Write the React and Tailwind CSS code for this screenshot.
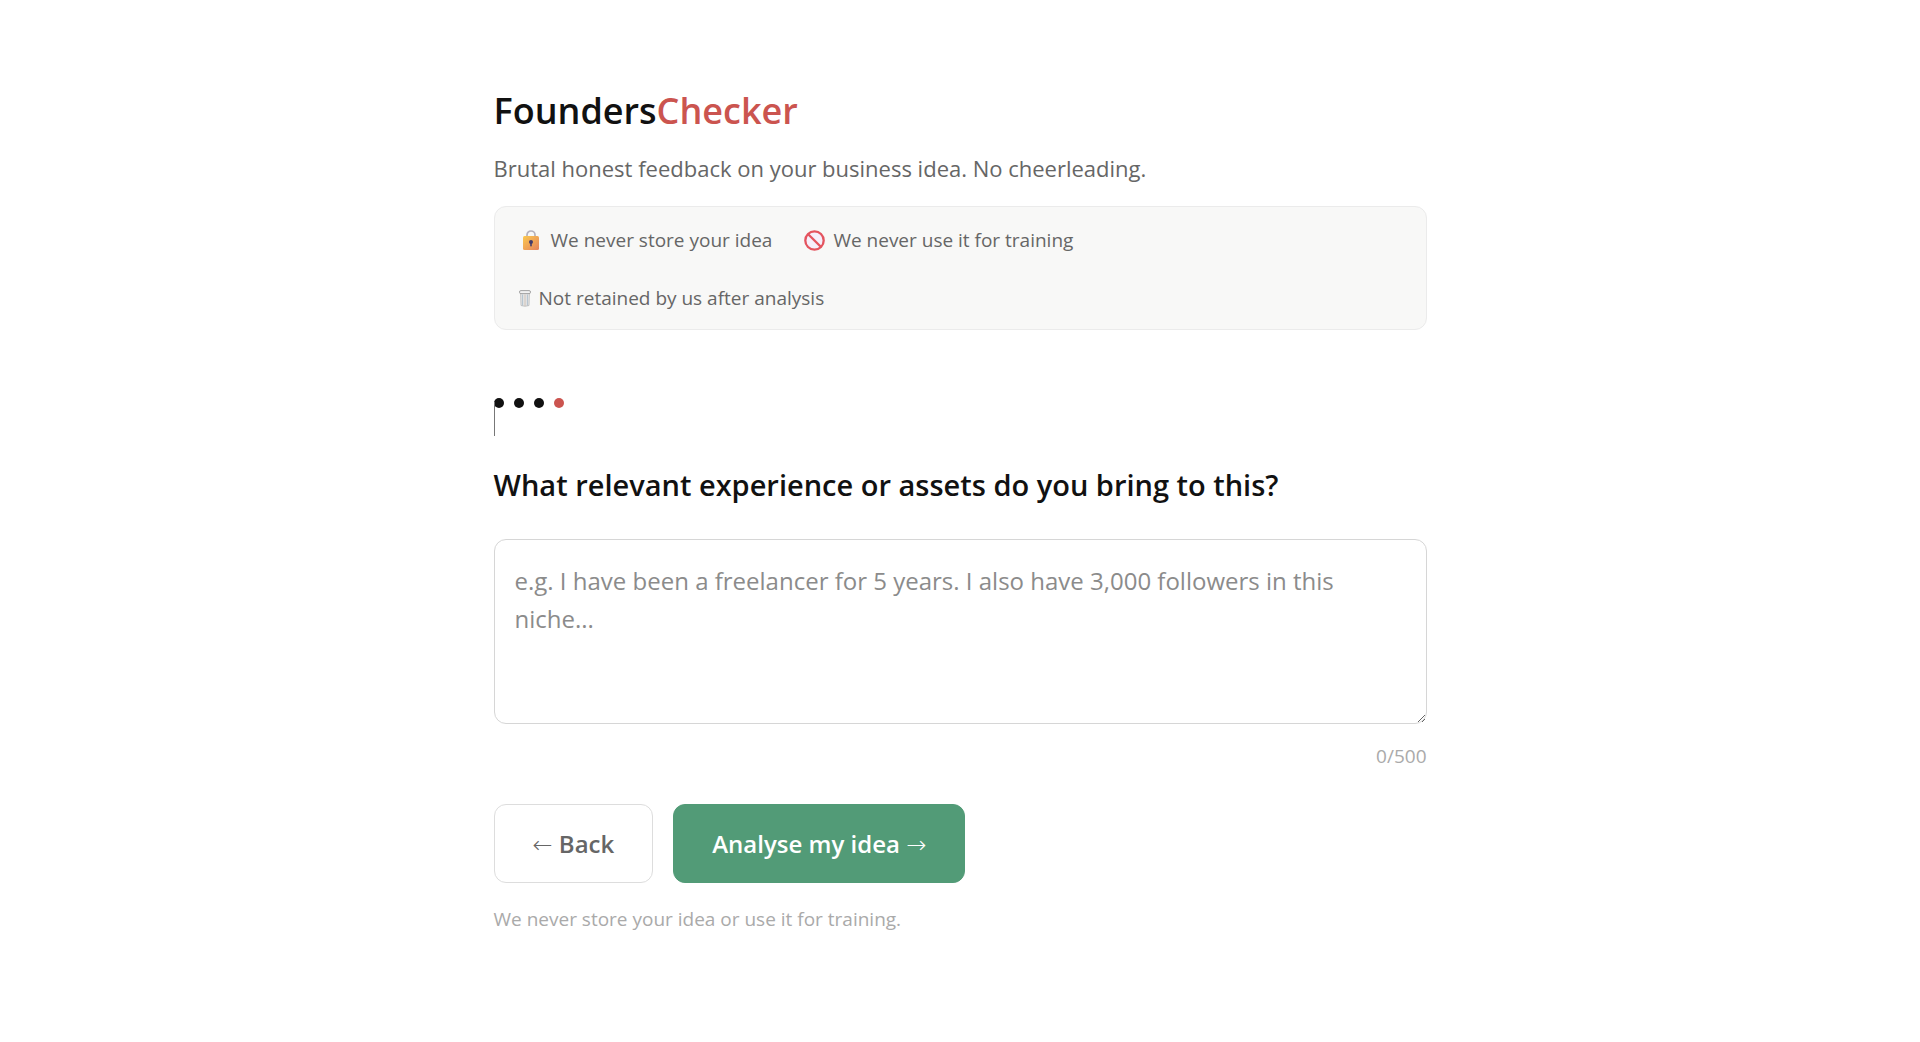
import React, { useState } from 'react';

const MAX_LENGTH = 500;
const STEPS = ['idea', 'customer', 'revenue', 'experience'];

function LockIcon() {
  return (
    <svg width="16" height="20" viewBox="0 0 16 20" aria-hidden="true">
      <defs>
        <linearGradient id="lockBody" x1="0" y1="0" x2="1" y2="1">
          <stop offset="0" stopColor="#fbc94f" />
          <stop offset="1" stopColor="#e5825c" />
        </linearGradient>
      </defs>
      <path d="M4 7V5a4 4 0 0 1 8 0v2" fill="none" stroke="#b4b1bd" strokeWidth="1.7" />
      <rect x="0" y="6" width="16" height="14" rx="1.5" fill="url(#lockBody)" />
      <circle cx="8" cy="12" r="2" fill="#433b6b" />
      <rect x="7.2" y="12" width="1.6" height="4.6" rx="0.8" fill="#433b6b" />
    </svg>
  );
}

function ProhibitedIcon() {
  return (
    <svg width="21" height="21" viewBox="0 0 21 21" aria-hidden="true">
      <circle cx="10.5" cy="10.5" r="9.2" fill="#f6effb" stroke="#e4545f" strokeWidth="2.3" />
      <path d="M4.2 4.2 16.8 16.8" stroke="#e4545f" strokeWidth="2.3" />
    </svg>
  );
}

function TrashIcon() {
  return (
    <svg width="12" height="17" viewBox="0 0 12 17" aria-hidden="true">
      <path d="M1.6 2.5h8.8l-.4 13q-4 1.6-8 0z" fill="#e6e6e6" stroke="#b9b9b9" strokeWidth="0.8" />
      <path d="M3.6 4.5v11M8.4 4.5v11" stroke="#a3b8c6" strokeWidth="0.8" />
      <path d="M6 4.5v11.5" stroke="#c9b8a8" strokeWidth="0.8" />
      <rect x="0.5" y="0.6" width="11" height="3" rx="1.4" fill="#f1f1f1" stroke="#999" strokeWidth="0.9" />
    </svg>
  );
}

export default function App() {
  const [answer, setAnswer] = useState('');

  return (
    <main className="mx-auto max-w-[933px] pt-[81px] pb-24 font-['Open_Sans','Noto_Sans',sans-serif] text-[#111]">
      {/* Header */}
      <header>
        <h1 className="text-[36px] leading-[60px] font-semibold">
          Founders<span className="text-[#cb544f]">Checker</span>
        </h1>
        <p className="mt-[10px] text-[22px] leading-[34px] text-[#666]">
          Brutal honest feedback on your business idea. No cheerleading.
        </p>
      </header>

      {/* Privacy notes */}
      <ul className="mt-[21px] flex flex-wrap gap-x-8 gap-y-6 rounded-xl border border-[#ebebeb] bg-[#f8f8f7] px-6 pt-4 pb-[14px] text-[19px] leading-[34px] text-[#666]">
        <li className="flex items-center gap-3 pl-1">
          <LockIcon />
          We never store your idea
        </li>
        <li className="flex items-center gap-2">
          <ProhibitedIcon />
          We never use it for training
        </li>
        <li className="flex basis-full items-center gap-2">
          <TrashIcon />
          Not retained by us after analysis
        </li>
      </ul>

      {/* Progress */}
      <div className="relative mt-17 flex gap-[10px]">
        {STEPS.map((step, i) => (
          <span
            key={step}
            className={`size-[10px] rounded-full ${i === STEPS.length - 1 ? 'bg-[#cb544f]' : 'bg-[#111]'}`}
          />
        ))}
        <span className="absolute top-1 left-0 h-[34px] w-px bg-[#777]" />
      </div>

      {/* Question */}
      <form onSubmit={(e) => e.preventDefault()}>
        <label htmlFor="answer" className="mt-[55px] block text-[29px] leading-[44px] font-semibold">
          What relevant experience or assets do you bring to this?
        </label>
        <textarea
          id="answer"
          rows={4}
          maxLength={MAX_LENGTH}
          value={answer}
          onChange={(e) => setAnswer(e.target.value)}
          placeholder="e.g. I have been a freelancer for 5 years. I also have 3,000 followers in this niche..."
          className="mt-8 block w-full rounded-xl border border-[#d6d6d6] px-5 pt-[22px] pb-[9px] text-[24px] leading-[38px] outline-none placeholder:text-[#8b8b8b]"
        />
        <p className="mt-4 text-right text-[19px] leading-[32px] text-[#aaa]">
          {answer.length}/{MAX_LENGTH}
        </p>

        <div className="mt-8 flex gap-5">
          <button
            type="button"
            className="rounded-xl border border-[#ddd] px-[38px] py-5 text-[24px] leading-[37px] font-semibold text-[#666]"
          >
            <span className="font-['DejaVu_Sans',sans-serif] leading-none font-extralight">←</span> Back
          </button>
          <button
            type="submit"
            className="rounded-xl border border-[#529b77] bg-[#529b77] px-[38px] py-5 text-[24px] leading-[37px] font-semibold text-white"
          >
            Analyse my idea <span className="font-['DejaVu_Sans',sans-serif] leading-none font-extralight">→</span>
          </button>
        </div>
      </form>

      <p className="mt-5 text-[19px] leading-[32px] text-[#aaa]">
        We never store your idea or use it for training.
      </p>
    </main>
  );
}
